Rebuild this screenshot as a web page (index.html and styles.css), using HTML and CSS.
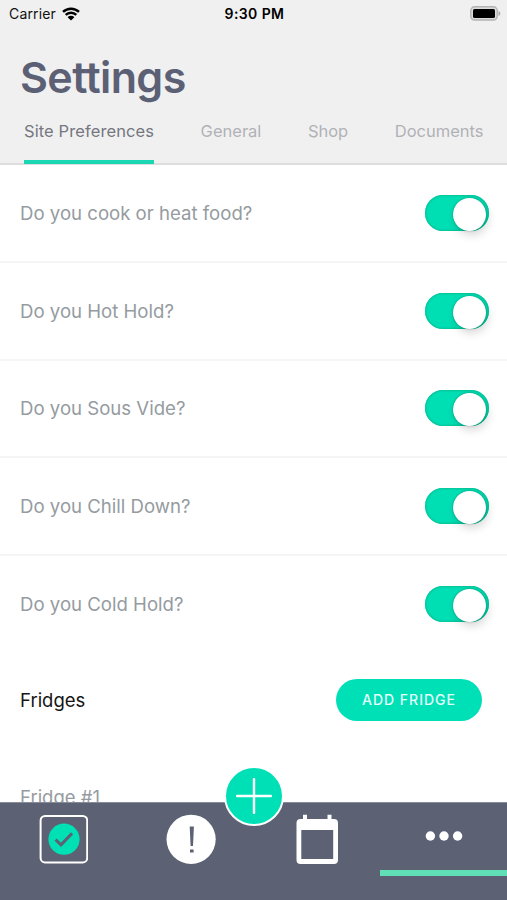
FILE: index.html
```
<!DOCTYPE html>
<html lang="en">
<head>
<meta charset="utf-8">
<title>Settings</title>
<link rel="stylesheet" href="styles.css">
</head>

<body>
<div class="app">
    <div class="header">
        <div class="status">
            <div class="carrier">
                <span>Carrier</span>
                <svg class="wifi" width="18" height="14" viewBox="0 0 18 14">
                    <path d="M1 4.9a11.6 11.6 0 0 1 16 0M3.7 7.8a7.6 7.6 0 0 1 10.6 0" fill="none" stroke="#000" stroke-width="2.5"/>
                    <path d="M9 13.6L5.6 10.2a4.8 4.8 0 0 1 6.8 0z" fill="#000"/>
                </svg>
            </div>
            <div class="time">9:30 PM</div>
            <svg class="battery" width="31" height="15" viewBox="0 0 31 15">
                <rect x=".8" y=".8" width="26.4" height="13.2" rx="3.8" fill="#dcdcdc" stroke="#b3b3b3" stroke-width="1.4"/>
                <rect x="3" y="3" width="22" height="9" rx="1.5" fill="#000"/>
                <path d="M28.5 5v5c2.4-.8 2.4-4.2 0-5z" fill="#a9a9a9"/>
            </svg>
        </div>
        <h1>Settings</h1>
        <ul class="tabs">
            <li class="active">Site Preferences</li>
            <li>General</li>
            <li>Shop</li>
            <li>Documents</li>
        </ul>
    </div>

    <div class="content">
        <ul class="options">
            <li><span>Do you cook or heat food?</span><i class="switch"></i></li>
            <li><span>Do you Hot Hold?</span><i class="switch"></i></li>
            <li><span>Do you Sous Vide?</span><i class="switch"></i></li>
            <li><span>Do you Chill Down?</span><i class="switch"></i></li>
            <li><span>Do you Cold Hold?</span><i class="switch"></i></li>
        </ul>
        <div class="fridges">
            <h2>Fridges</h2>
            <a class="btn" href="#">ADD FRIDGE</a>
        </div>
        <div class="fridge">Fridge #1</div>
    </div>

    <div class="nav">
        <a href="#">
            <svg width="50" height="50" viewBox="0 0 50 50">
                <rect x="2.6" y="2" width="46.6" height="46.4" rx="4.5" fill="none" stroke="#fff" stroke-width="2"/>
                <circle cx="26" cy="25.2" r="15.6" fill="#00e0b5"/>
                <path d="M17.6 25.6l5.4 5.2 11-11.4" fill="none" stroke="#5c6173" stroke-width="3"/>
            </svg>
        </a>
        <a href="#">
            <svg width="52" height="50" viewBox="0 0 52 50">
                <circle cx="27.1" cy="25.3" r="24.6" fill="#fff"/>
                <path d="M25.7 12.5h4.2l-.9 19.5h-2.4zM26 35.4h3.6v3.2h-3.6z" fill="#5c6173"/>
            </svg>
        </a>
        <a href="#">
            <svg width="50" height="50" viewBox="0 0 50 50">
                <path fill="#fff" fill-rule="evenodd" d="M8.5 5h2.500V.8h4V5h20.500V.8h4V5h2.500a4 4 0 0 1 4 4V46a4 4 0 0 1-4 4H8.500a4 4 0 0 1-4-4V9a4 4 0 0 1 4-4zM9.300 16V45H41.200V16z"/>
            </svg>
        </a>
        <a class="active" href="#">
            <svg width="50" height="50" viewBox="0 0 50 50">
                <g fill="#fff">
                    <circle cx="11.400" cy="22" r="4.700"/>
                    <circle cx="25" cy="22" r="4.700"/>
                    <circle cx="38.600" cy="22" r="4.700"/>
                </g>
            </svg>
        </a>
        <a class="add" href="#">
            <svg width="36" height="36" viewBox="0 0 36 36">
                <path d="M18 1v34M1 18h34" stroke="#fff" stroke-width="2.400" stroke-linecap="round"/>
            </svg>
        </a>
    </div>
</div>
</body>
</html>
```
FILE: styles.css
```
*{margin:0;padding:0;list-style:none;box-sizing:border-box;}
body{background:#fff;font-family:Inter,"Liberation Sans",sans-serif;}
a{text-decoration:none;}
svg{display:block;}

.app{display:flex;flex-direction:column;width:507px;height:900px;overflow:hidden;}

.header{flex:none;height:165px;background:#f0f0f0;border-bottom:2px solid #dedede;}
.status{display:grid;grid-template-columns:1fr auto 1fr;align-items:center;height:27px;padding:0 6px 0 9px;font-size:14px;color:#111;}
.carrier{display:flex;align-items:center;gap:6px;letter-spacing:.15px;}
.time{padding-right:1px;font-weight:600;letter-spacing:.4px;color:#000;}
.battery{justify-self:end;}
h1{height:84px;padding:23px 20px 0;font-size:43px;line-height:54px;font-weight:600;letter-spacing:-.6px;color:#5c6075;}
.tabs{display:flex;justify-content:space-between;height:53px;padding:0 23.500px 0 24px;}
.tabs li{height:53px;padding-top:8px;font-size:16.500px;line-height:24px;color:#b0b2b7;}
.tabs .active{letter-spacing:.1px;color:#747780;border-bottom:4px solid #1bd6b3;}

.content{flex:1;min-height:0;overflow:hidden;}
.options li{display:flex;justify-content:space-between;align-items:center;height:97.750px;padding:0 18px 0 20px;border-bottom:2px solid #f5f5f5;font-size:18.600px;color:#959b9f;}
.options li:last-child{border-bottom-color:transparent;}
.switch{display:flex;justify-content:flex-end;width:64px;height:36px;padding:3px 3px 0 0;border-radius:18px;background:#00dfb4;box-shadow:inset 0 0 2px 1px #08bf96;}
.switch:after{content:"";width:33px;height:33px;border-radius:50%;background:#fff;box-shadow:0 0 2px rgba(0,0,0,.35),2px 4px 10px rgba(0,0,0,.16);}

.fridges{display:flex;justify-content:space-between;align-items:center;height:92px;padding:0 25px 0 20px;}
h2{font-size:18.500px;font-weight:400;color:#151515;}
.btn{width:146px;height:42px;border-radius:21px;background:#00e0b7;color:#e4fff9;font-size:14px;line-height:42px;font-weight:500;letter-spacing:1px;text-align:center;}
.fridge{padding:39px 20px 0;font-size:18.500px;line-height:24px;color:#959b9f;}

.nav{position:relative;display:flex;flex:none;height:98px;background:#5c6173;border-top:1px solid #858b98;}
.nav a{display:flex;flex:1;justify-content:center;height:73px;padding-top:11px;}
.nav .active{border-bottom:6px solid #61dfb6;}
/* floating button sits over the top edge of the bar */
.nav .add{position:absolute;left:224px;top:-37px;width:60px;height:60px;padding:0;align-items:center;border:2px solid #fff;border-radius:50%;background:#00e0b7;}
```
